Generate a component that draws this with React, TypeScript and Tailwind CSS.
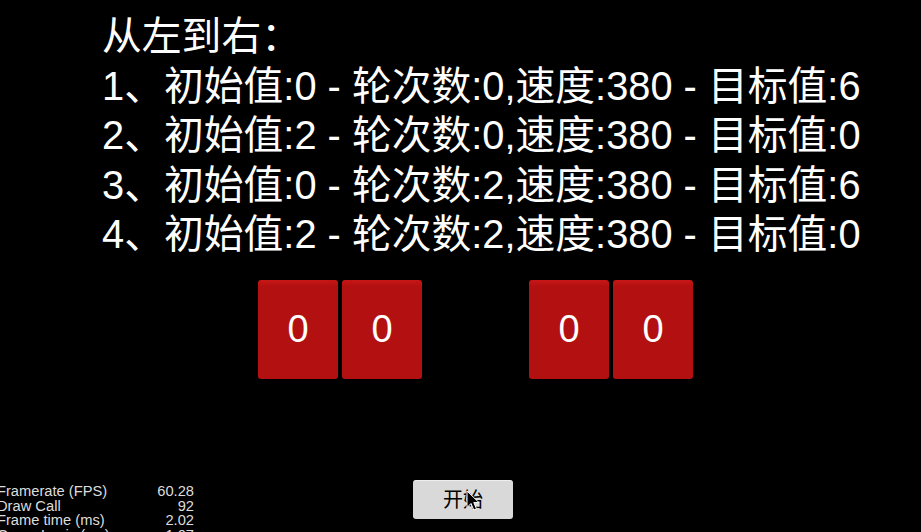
const lines = [
  "从左到右：",
  "1、初始值:0 - 轮次数:0,速度:380 - 目标值:6",
  "2、初始值:2 - 轮次数:0,速度:380 - 目标值:0",
  "3、初始值:0 - 轮次数:2,速度:380 - 目标值:6",
  "4、初始值:2 - 轮次数:2,速度:380 - 目标值:0",
];

const stats = [
  { label: "Framerate (FPS)", value: "60.28" },
  { label: "Draw Call", value: "92" },
  { label: "Frame time (ms)", value: "2.02" },
  { label: "Game Logic (ms)", value: "1.07" },
];

const font = { fontFamily: '"Liberation Sans", "Noto Sans CJK SC", sans-serif' };

const Card = ({ value }: { value: number }) => (
  <div className="w-[80px] h-[99px] rounded-[3px] bg-[#b31111] bg-gradient-to-b from-[#c81616] from-0% to-[#b31111] to-[6%] flex items-center justify-center text-white text-[38px] leading-none">
    {value}
  </div>
);

const Cursor = () => (
  <svg
    className="absolute left-[466px] top-[490px]"
    width="14"
    height="22"
    viewBox="0 0 14 22"
  >
    <path
      d="M1 1 L1 17.5 L5 13.5 L7.8 20 L10.5 18.8 L7.8 12.6 L13 12.6 Z"
      fill="#000"
      stroke="#fff"
      strokeWidth="1"
      strokeLinejoin="round"
    />
  </svg>
);

export default function App() {
  return (
    <div
      className="relative w-full h-[532px] bg-black overflow-hidden flex flex-col"
      style={font}
    >
      <div className="pt-[12px] pl-[102px] text-white text-[39.8px] leading-[49.5px] whitespace-nowrap">
        {lines.map((l) => (
          <div key={l}>{l}</div>
        ))}
      </div>

      <div className="mt-[20px] ml-[258px] flex">
        <div className="flex gap-[4px]">
          <Card value={0} />
          <Card value={0} />
        </div>
        <div className="flex gap-[4px] ml-[107px]">
          <Card value={0} />
          <Card value={0} />
        </div>
      </div>

      <button className="mt-[101px] ml-[413px] w-[100px] h-[39px] rounded-[3px] bg-[#d9d9d9] border-t border-[#eeeeee] text-black text-[20px] leading-none flex items-center justify-center">
        开始
      </button>

      <div className="absolute left-[-3px] top-[484px] w-[197px] text-[#dddddd] text-[14.7px] leading-[14.5px]">
        {stats.map((s) => (
          <div key={s.label} className="flex justify-between">
            <span>{s.label}</span>
            <span>{s.value}</span>
          </div>
        ))}
      </div>

      <Cursor />
    </div>
  );
}
